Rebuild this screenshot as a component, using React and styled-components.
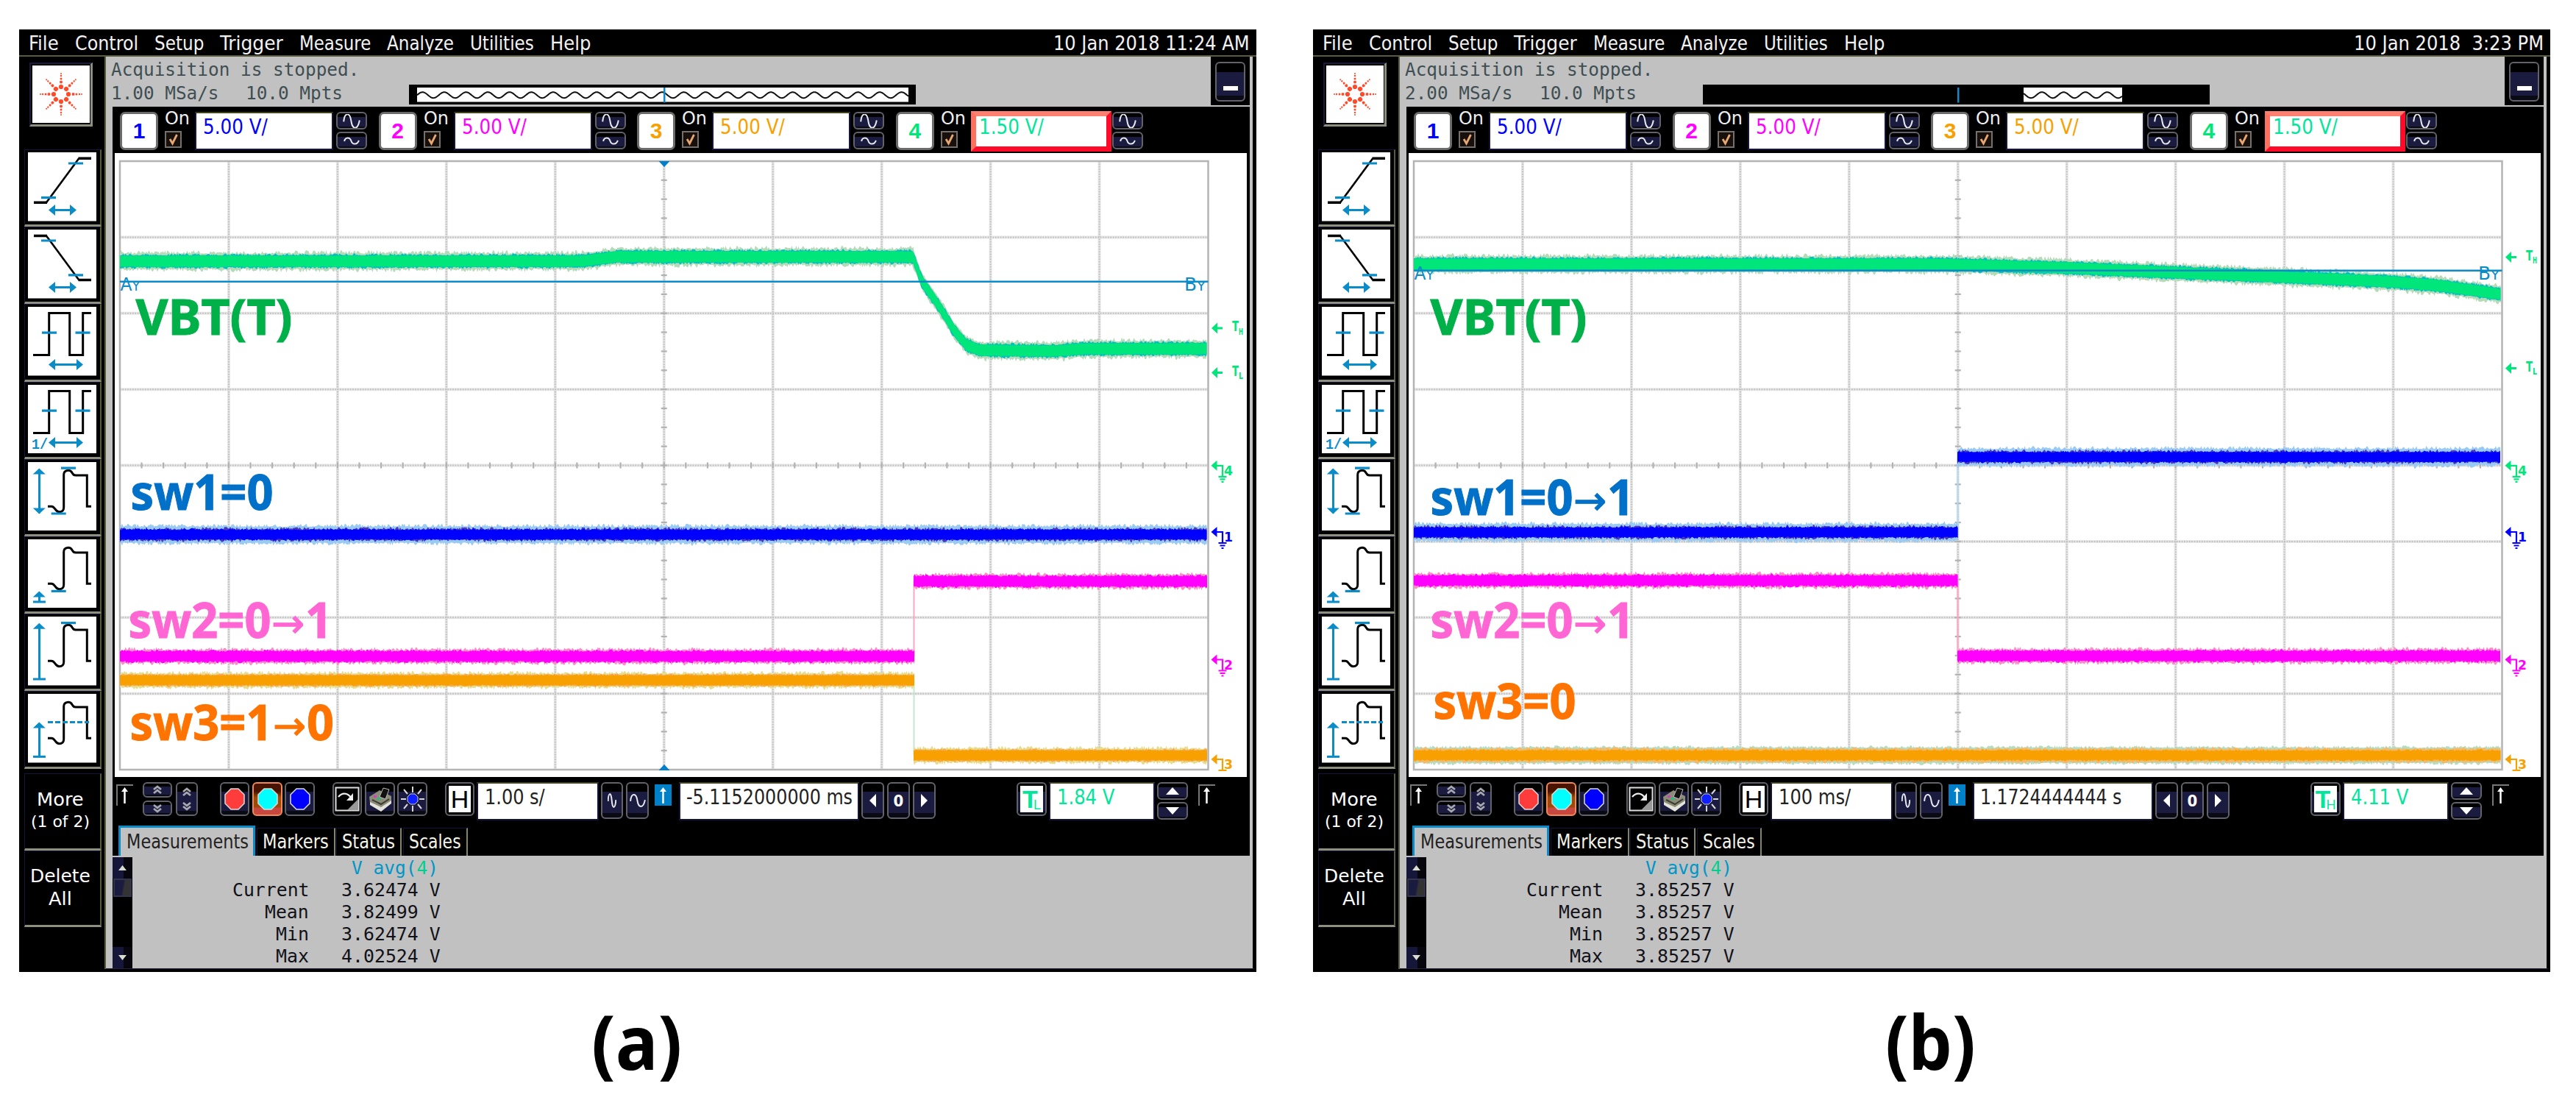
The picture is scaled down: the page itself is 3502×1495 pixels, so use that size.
import React, { useLayoutEffect, useRef, useState } from 'react';
import styled, { createGlobalStyle } from 'styled-components';

const color = {
  grey: '#c1c1c1',
  olive: '#5a5a3c',
  navy: '#1b1b40',
  blue: '#0a8cc8',
  ch1: '#0000ff',
  ch2: '#ff00ff',
  ch3: '#f7a000',
  ch4: '#00e67a',
};

const tahoma = '"DejaVu Sans Condensed", "DejaVu Sans", "Open Sans", sans-serif';
const mono = '"DejaVu Sans Mono", "Liberation Mono", monospace';

const GlobalStyle = createGlobalStyle`
  *, *::before, *::after {
    box-sizing: border-box;
  }

  body {
    margin: 0;
    background: #fff;
    font-family: ${tahoma};
  }

  svg {
    display: block;
    flex: none;
  }
`;

/* ---------- text squeezed to a given width ---------- */

const StyledFit = styled.span`
  display: block;
  flex: none;
  width: ${({ $w }) => $w}px;
  white-space: pre;
`;

const StyledFitInner = styled.span`
  display: inline-block;
  transform-origin: 0 50%;
`;

const Fit = ({ w, children }) => {
  const ref = useRef(null);
  const [scale, setScale] = useState(1);

  useLayoutEffect(() => {
    setScale(w / ref.current.offsetWidth);
  }, [w]);

  return (
    <StyledFit $w={w}>
      <StyledFitInner ref={ref} style={{ transform: `scaleX(${scale})` }}>
        {children}
      </StyledFitInner>
    </StyledFit>
  );
};

/* ---------- page ---------- */

const StyledPage = styled.main`
  display: flex;
  gap: 77px;
  width: 3502px;
  height: 1495px;
  padding: 40px 0 0 26px;
  overflow: hidden;
`;

const StyledFigure = styled.figure`
  width: 1682px;
  margin: 0;
`;

const StyledCaption = styled.figcaption`
  display: flex;
  padding: 39px 0 0 778px;
  font: 700 102px/110px 'Noto Sans', 'Open Sans', sans-serif;
  color: #000;
`;

const StyledScope = styled.section`
  display: flex;
  flex-direction: column;
  height: 1281px;
  background: #000;
`;

const StyledMenuBar = styled.nav`
  display: flex;
  gap: 22px;
  height: 37px;
  padding: 0 9px 0 13px;
  border-bottom: 2px solid ${color.olive};
  font-size: 26.5px;
  line-height: 37px;
  color: #f2f2f2;
`;

const StyledDate = styled.div`
  margin-left: auto;
`;

const StyledBody = styled.div`
  display: flex;
  height: 1240px;
`;

/* ---------- sidebar ---------- */

const StyledSidebar = styled.aside`
  width: 118px;
  padding: 8px 0 0 7px;
  border-right: 2px solid ${color.olive};
`;

const StyledLogo = styled.div`
  width: 86px;
  height: 87px;
  margin: 0 0 31px 7px;
  padding: 2px;
  border: 2px solid ${color.navy};
  border-right: 3px solid #8f8f80;
  border-bottom: 3px solid #8f8f80;
`;

const StyledSideButton = styled.div`
  width: 105px;
  height: 105.2px;
  padding: 3px 0 0 4px;
  border: 1px solid #15153a;
  border-right: 2px solid ${color.olive};
  border-bottom: 3px solid #8f8f80;
`;

const StyledSideText = styled.div`
  display: flex;
  flex-direction: column;
  align-items: center;
  width: 105px;
  height: ${({ $h }) => $h}px;
  margin-top: ${({ $mt }) => $mt || 0}px;
  padding: ${({ $pt }) => $pt}px 7px 0 0;
  border: 1px solid #15153a;
  border-right: 2px solid ${color.olive};
  border-bottom: 3px solid #8f8f80;
  font-size: 25px;
  line-height: 31px;
  color: #fff;
`;

const StyledSmall = styled.span`
  font-size: 21px;
`;

/* ---------- main column ---------- */

const StyledMain = styled.div`
  display: flex;
  flex: 1;
  height: 1240px;
  padding-left: 9px;
  background: ${color.grey};
  border-right: 5px solid #000;
  border-bottom: 1px solid #22223a;
`;

const StyledColumn = styled.div`
  display: flex;
  flex-direction: column;
  width: 1546px;
`;

const StyledStatus = styled.header`
  display: flex;
  height: 68px;
`;

const StyledAcquisition = styled.div`
  width: 403px;
  padding-top: 2px;
  margin-left: -2px;
  font: 24px/32.3px ${mono};
  color: #3e4e52;
`;

const StyledRates = styled.div`
  display: flex;
  gap: 36px;
`;

const StyledMinimizeBox = styled.div`
  width: 53px;
  height: 66px;
  margin-left: auto;
  padding: 7px 0 0 6px;
  background: #000;
`;

const StyledMemory = styled.div`
  display: flex;
  width: 689px;
  height: 27px;
  margin: 38px 0 0 2px;
  background: #000;
`;

/* bevelled key used in both tool bars */
const StyledKey = styled.div`
  display: flex;
  flex: none;
  align-items: center;
  justify-content: center;
  width: ${({ $w }) => $w}px;
  height: ${({ $h }) => $h}px;
  margin-left: ${({ $ml }) => $ml || 0}px;
  border: 2.5px solid #62626a;
  border-radius: 6px;
  background: linear-gradient(#000 0 25%, ${color.navy} 25% 88%, #0a0a14 88%);
  color: #fff;
`;

const StyledHotKey = styled(StyledKey)`
  border-color: #f08858;
  background: linear-gradient(#481400 0 25%, #9c4a08 45%, #9c4a08 75%, #c84840 80%);
`;

const StyledPlainKey = styled(StyledKey)`
  background: #000;
`;

const StyledKeyPair = styled.div`
  display: flex;
  flex-direction: column;
  gap: ${({ $gap }) => $gap || 3}px;
  margin-left: ${({ $ml }) => $ml}px;
`;

const StyledField = styled.div`
  flex: none;
  width: ${({ $w }) => $w}px;
  height: 52px;
  margin-left: ${({ $ml }) => $ml}px;
  padding: ${({ $pl }) => `2px 0 0 ${$pl || 9}px`};
  border: 2px solid #15153a;
  border-top-color: #44441c;
  background: #fff;
  font-size: 28px;
  line-height: 34px;
  color: ${({ $color }) => $color || '#222'};
`;

const StyledActiveField = styled(StyledField)`
  width: 191px;
  height: 55px;
  margin: -1px 0 0 0;
  padding: 0 0 0 4px;
  border: 7px solid;
  border-color: #ff8070 #ff0a28 #ff0a28 #ff7060;
  line-height: 30px;
`;

const StyledChannels = styled.div`
  display: flex;
  height: 63px;
  padding: 7px 0 0 10px;
  background: #000;
`;

const StyledChannel = styled.div`
  display: flex;
  width: 351.6px;
`;

const StyledBadge = styled.div`
  display: flex;
  align-items: center;
  justify-content: center;
  width: 52px;
  height: 52px;
  border: 3px solid #6c6c6c;
  border-radius: 7px;
  background: #fff;
  font: 700 30px/46px 'Liberation Sans', sans-serif;
  color: ${({ $color }) => $color};
`;

const StyledOn = styled.div`
  display: flex;
  flex-direction: column;
  width: 41px;
  margin-left: 9px;
  font-size: 25px;
  line-height: 17px;
  color: #eee;
`;

const StyledCheck = styled.div`
  width: 23px;
  height: 23px;
  margin-top: 9px;
  border: 2px solid #76706c;
  background: #17100c;
`;

const StyledPlot = styled.div`
  height: 848px;
  padding: 1px 0 0 3px;
  background: linear-gradient(90deg, #000 0 3px, #fff 3px 1542px, #000 1542px);
`;

const StyledHorizontal = styled.div`
  display: flex;
  height: 66px;
  padding: 7px 0 0 5px;
  background: #000;
`;

const StyledSlope = styled.div`
  width: 23px;
  height: 29px;
  margin: 3px 0 0 ${({ $ml }) => $ml || 0}px;
  border-top: 2px solid #777;
  border-left: 2px solid #777;
  background: #000;
`;

const StyledSlopeOn = styled(StyledSlope)`
  border-color: #0080c8;
  background: #0080c8;
`;

const StyledWhiteFace = styled.div`
  display: flex;
  justify-content: center;
  width: ${({ $w }) => $w}px;
  height: 36px;
  background: #fff;
  font: ${({ $weight }) => $weight || 400} 34px/36px 'Liberation Sans', sans-serif;
  color: ${({ $color }) => $color || '#000'};
`;

const StyledSub = styled.span`
  align-self: flex-end;
  margin-left: -6px;
  font: 18px/19px 'Liberation Sans', sans-serif;
`;

const StyledZero = styled.span`
  padding-top: 2px;
  font: 700 22px/24px ${tahoma};
`;

const StyledTabs = styled.div`
  display: flex;
  align-items: flex-end;
  height: 41px;
  padding-left: 8px;
  background: #000;
  font-size: 26.5px;
`;

const StyledTab = styled.div`
  height: 38px;
  margin-left: 1.5px;
  padding: 0 7px;
  border: 1px solid #15153a;
  border-right: 2px solid #84846a;
  border-bottom: 0;
  line-height: 35px;
  color: #f4f4e8;
`;

const StyledActiveTab = styled.div`
  height: 41px;
  width: 186px;
  padding: 0 8px;
  border: 3px solid ${color.blue};
  border-bottom: 0;
  background: ${color.grey};
  line-height: 38px;
  color: #222;
`;

const StyledResults = styled.div`
  display: flex;
  height: 153px;
  font: 24.5px/30px ${mono};
`;

const StyledScroll = styled.div`
  display: flex;
  flex-direction: column;
  justify-content: space-between;
  width: 27px;
  margin-top: 2px;
  background: #000;
`;

const StyledScrollEnd = styled.div`
  display: flex;
  align-items: center;
  justify-content: center;
  height: 29px;
  background: linear-gradient(90deg, #16163a 55%, #06060c 55%);
`;

const StyledThumb = styled.div`
  width: 25px;
  height: 26px;
  margin: 0 0 68px 1px;
  border: 2px solid #34344c;
  background: linear-gradient(100deg, ${color.navy} 50%, #333 60%);
`;

const StyledTable = styled.dl`
  display: grid;
  grid-template-columns: 240px auto;
  grid-auto-rows: 30px;
  column-gap: 44px;
  align-content: start;
  justify-items: end;
  margin: 2px 0 0;
  color: #111118;

  dt,
  dd {
    margin: 0;
  }
`;

const StyledHeading = styled.dd`
  padding-right: 3px;
  color: #0096c8;

  b {
    font-weight: 400;
    color: #00cf90;
  }
`;

/* ---------- side bar drawings ---------- */

const Logo = () => (
  <svg width="78" height="78" viewBox="0 0 78 78">
    <rect width="78" height="78" fill="#fff" />
    {[0, 45, 90, 135, 180, 225, 270, 315].map((angle) => (
      <g key={angle} fill="#ff4a2a" transform={`rotate(${angle} 39 39)`}>
        <circle cx="49" cy="39" r="3.1" />
        <circle cx="55.5" cy="39" r="2" />
        <circle cx="60" cy="39" r="1.5" />
        <circle cx="64" cy="39" r="1.2" />
        <circle cx="67" cy="39" r="1" />
      </g>
    ))}
  </svg>
);

const pulse = 'M7 65.4H28.7V8.6H56.7V65.4H74.7V8.6H86';
const overshoot =
  'M27 60.3h5c5 0 5 7.5 10.5 7.5 4 0 6.2-2.5 6.2-6V17c0-7 9-7 11.3-2.5 1.5 2.5 2 3.5 5 3.5h15.3v42.3H86';

const Spread = ({ x2 }) => (
  <g fill={color.blue} stroke="none">
    <rect x="33" y="77" width={x2 - 38} height="3" />
    <path d={`M28 78.5l9-7.5v15zM${x2} 78.5l-9-7.5v15z`} />
  </g>
);

const Ticks = ({ d }) => <path d={d} stroke={color.blue} strokeWidth="3.2" />;

const Rise = ({ top, bottom, both }) => (
  <g fill={color.blue} stroke="none">
    <rect x="14" y={top + 3} width="3" height={bottom - top - 4} />
    <path d={`M15.3 ${top}l8.5 8h-17z`} />
    {both ? (
      <path d={`M15.3 ${bottom}l8.5-8h-17z`} />
    ) : (
      <rect x="7" y={bottom - 1.5} width="17" height="3" />
    )}
  </g>
);

const sideIcons = [
  <>
    <path d="M8 68.3H26M68.5 8.3H86" strokeWidth="3.5" />
    <path d="M25 68.3L69.3 8.3" strokeWidth="2.6" />
    <Ticks d="M18 61.7H38M55 15H75" />
    <Spread x2={66} />
  </>,
  <>
    <path d="M8 8.6H26M68.5 68.6H86" strokeWidth="3.5" />
    <path d="M25 8.6L69.3 68.6" strokeWidth="2.6" />
    <Ticks d="M18 15H38M55 61.8H75" />
    <Spread x2={66} />
  </>,
  <>
    <path d={pulse} />
    <Ticks d="M19 35.2H39M64.5 35.2H84.5" />
    <Spread x2={75} />
  </>,
  <>
    <path d={pulse} />
    <Ticks d="M19 35.2H39M64.5 35.2H84.5" />
    <Spread x2={75} />
    <text
      x="5"
      y="86.5"
      fontSize="21"
      fontWeight="700"
      fontFamily="Liberation Mono"
      textLength="22"
      lengthAdjust="spacingAndGlyphs"
      fill={color.blue}
      stroke="none"
    >
      1/
    </text>
  </>,
  <>
    <path d={overshoot} />
    <Ticks d="M45 8.2H65M31.7 70H51.7" />
    <Rise top={8.5} bottom={70.5} both />
  </>,
  <>
    <path d={overshoot} />
    <Ticks d="M31.7 70.4H51.7" />
    <Rise top={70.4} bottom={85} />
  </>,
  <>
    <path d={overshoot} />
    <Ticks d="M45 8.6H65" />
    <Rise top={8.7} bottom={85} />
  </>,
  <>
    <path d={overshoot} />
    <path d="M27 38.4H83" stroke={color.blue} strokeWidth="3" strokeDasharray="7 3" />
    <Rise top={38.4} bottom={85.4} />
  </>,
];

const Sidebar = () => (
  <StyledSidebar>
    <StyledLogo>
      <Logo />
    </StyledLogo>
    {sideIcons.map((icon, index) => (
      <StyledSideButton key={index}>
        <svg width="93" height="93.5" viewBox="0 0 93 93.5" fill="none" stroke="#000" strokeWidth="3">
          <rect width="93" height="93.5" fill="#fff" stroke="none" />
          {icon}
        </svg>
      </StyledSideButton>
    ))}
    <StyledSideText $h={105} $mt={6} $pt={19}>
      <Fit w={64}>More</Fit>
      <StyledSmall>
        <Fit w={80}>(1 of 2)</Fit>
      </StyledSmall>
    </StyledSideText>
    <StyledSideText $h={104} $pt={18}>
      <Fit w={82}>Delete</Fit>
      <Fit w={32}>All</Fit>
    </StyledSideText>
  </StyledSidebar>
);

/* ---------- small glyphs ---------- */

const Sine = ({ w, h, amp }) => (
  <svg width={w} height={h} viewBox="0 0 20 20" preserveAspectRatio="none">
    <path
      d={`M1 11C2 ${10 - amp} 8 ${10 - amp} 9.5 10S17 ${10 + amp} 19 9`}
      fill="none"
      stroke="#e8e8f0"
      strokeWidth="2"
      vectorEffect="non-scaling-stroke"
    />
  </svg>
);

const Chevrons = ({ down }) => (
  <svg width="14" height="13" viewBox="0 0 14 13" fill="none" stroke="#a8a8b0" strokeWidth="2.8">
    <path d={down ? 'M2 2l5 4 5-4M2 7l5 4 5-4' : 'M2 6l5-4 5 4M2 11l5-4 5 4'} />
  </svg>
);

const Triangle = ({ w, h, points, fill = '#fff' }) => (
  <svg width={w} height={h} viewBox="0 0 10 10" preserveAspectRatio="none">
    <polygon points={points} fill={fill} />
  </svg>
);

const Dot = ({ fill }) => (
  <svg width="30" height="30" viewBox="0 0 30 30">
    <path d="M10 1h10l8 8v12l-8 8H10l-8-8V9z" fill={fill} stroke="#dcdcdc" strokeWidth="1.5" />
  </svg>
);

const SlopeArrow = () => (
  <svg width="20" height="26" viewBox="0 0 20 26">
    <path d="M9.5 24V5" stroke="#fff" strokeWidth="2.5" />
    <path d="M9.5 2l4.5 6H5z" fill="#fff" />
  </svg>
);

const SINE_PERIOD = 29.6;

const waveLine = (width, phase) => {
  const points = [];
  for (let x = 0; x <= width; x += 1) {
    const y = 10.2 - 4 * Math.sin(((x - phase) / SINE_PERIOD) * Math.PI * 2);
    points.push(`${x},${y.toFixed(1)}`);
  }
  return points.join(' ');
};

const MemoryBar = ({ start, width, phase }) => (
  <StyledMemory>
    <svg width="689" height="27" viewBox="0 0 689 27">
      <g transform={`translate(${start} 4)`}>
        <rect width={width} height="19.5" fill="#fff" />
        <polyline points={waveLine(width, phase)} fill="none" stroke="#111" strokeWidth="2" />
      </g>
      <rect x="346" y="4" width="2.5" height="20.5" fill={color.blue} />
    </svg>
  </StyledMemory>
);

/* ---------- plot ---------- */

const LEFT = 163;
const RIGHT = 1642.5;
const TOP = 219;
const BOTTOM = 1046;
const COL = (RIGHT - LEFT) / 10;
const ROW = (BOTTOM - TOP) / 8;

const random = (seed) => {
  let s = seed;
  return () => {
    s = (s * 16807) % 2147483647;
    return s / 2147483647;
  };
};

const centreAt = (points, x) => {
  const i = points.findIndex(([px]) => px >= x);
  if (i < 1) return points[0][1];
  const [x0, y0] = points[i - 1];
  const [x1, y1] = points[i];
  return y0 + ((y1 - y0) * (x - x0)) / (x1 - x0);
};

// polygon around a centre line with ragged upper and lower edges
const band = (points, half, jitter, seed) => {
  const next = random(seed);
  const upper = [];
  const lower = [];
  const end = points[points.length - 1][0];
  for (let x = points[0][0]; x <= end; x += 1.5) {
    const y = centreAt(points, x);
    upper.push(`${x},${(y - half - next() ** 2 * jitter).toFixed(1)}`);
    lower.unshift(`${x},${(y + half + next() ** 2 * jitter).toFixed(1)}`);
  }
  return [...upper, ...lower].join(' ');
};

const noise = {
  ch1: [
    ['#98caf4', 10.5, 4.5],
    ['#4a38b8', 6.5, 4],
    [color.ch1, 6, 2.5],
  ],
  ch2: [
    ['#ff8cc8', 8, 4.5],
    [color.ch2, 6.5, 3],
  ],
  ch3: [
    ['#e6dc8c', 8.5, 4.5],
    ['#f8a850', 7, 2.5],
    [color.ch3, 6, 2],
  ],
  ch3green: [
    ['#b4dcc0', 10, 3.5],
    ['#f4b868', 8, 3.5],
    [color.ch3, 6, 2.5],
  ],
  ch4: [
    ['#b4dab8', 10, 5],
    ['#00c0c0', 7.8, 3],
    [color.ch4, 7, 1.5],
  ],
};

const Trace = ({ points, kind, seed }) => (
  <g>
    {noise[kind].map(([fill, half, jitter], i) => (
      <polygon key={fill} points={band(points, half, jitter, seed * 100 + i * 7 + 11)} fill={fill} />
    ))}
  </g>
);

const range = (n) => Array.from({ length: n }, (_, i) => i + 1);

const Grid = () => (
  <g fill="none" stroke="#b2b2b2" strokeWidth="2.2">
    <g stroke="#e6e6e6" strokeWidth="4">
      {range(9).map((i) => (
        <path key={`v${i}`} d={`M${LEFT + i * COL} ${TOP}V${BOTTOM}`} />
      ))}
      {range(7).map((i) => (
        <path key={`h${i}`} d={`M${LEFT} ${TOP + i * ROW}H${RIGHT}`} />
      ))}
    </g>
    <g stroke="#bebebe" strokeWidth="2" strokeDasharray="1.6 1.8">
      {range(9).map((i) => (
        <path key={`v${i}`} d={`M${LEFT + i * COL} ${TOP}V${BOTTOM}`} />
      ))}
      {range(7).map((i) => (
        <path key={`h${i}`} d={`M${LEFT} ${TOP + i * ROW}H${RIGHT}`} />
      ))}
    </g>
    {range(31).map((i) => (
      <path key={`y${i}`} d={`M${LEFT + 5 * COL - 4} ${TOP + (i * ROW) / 4}h8`} />
    ))}
    {range(49).map((i) => (
      <path key={`x${i}`} d={`M${LEFT + (i * COL) / 5} ${TOP + 4 * ROW - 4}v8`} />
    ))}
    <rect x={LEFT} y={TOP} width={RIGHT - LEFT} height={BOTTOM - TOP} stroke="#b4b4b4" strokeWidth="2.5" />
  </g>
);

const Ground = ({ y, n, fill, short }) => (
  <g fill="none" stroke={fill} strokeWidth="2.2">
    <path d={`M1646.5 ${y}l8-7v14z`} fill={fill} stroke="none" />
    <path d={`M1653 ${y}h9v14M1656.5 ${y + 15}h11`} />
    {!short && <path d={`M1658.5 ${y + 18.5}h7M1660.5 ${y + 22}h3`} />}
    <text
      x="1664"
      y={y + 13}
      fill={fill}
      stroke="none"
      fontSize="18"
      fontWeight="700"
      fontFamily="DejaVu Sans"
      textLength="12"
      lengthAdjust="spacingAndGlyphs"
    >
      {n}
    </text>
  </g>
);

const Threshold = ({ y, sub }) => (
  <g fill={color.ch4} fontFamily="DejaVu Sans" fontWeight="700">
    <path d={`M1647 ${y}l8-7.5v6h7v3h-7v6z`} />
    <text x="1675" y={y + 4} fontSize="20" textLength="9" lengthAdjust="spacingAndGlyphs">
      T
    </text>
    <text x="1684" y={y + 8.5} fontSize="13" textLength="6" lengthAdjust="spacingAndGlyphs">
      {sub}
    </text>
  </g>
);

const Cursor = ({ y }) => (
  <g fill={color.blue} fontFamily="DejaVu Sans">
    <rect x={LEFT} y={y - 1.2} width={RIGHT - LEFT} height="2.5" />
    <text x="163.5" y={y + 12.5} fontSize="24" textLength="16" lengthAdjust="spacingAndGlyphs">
      A
    </text>
    <text x="179.5" y={y + 12.5} fontSize="17" textLength="11" lengthAdjust="spacingAndGlyphs">
      Y
    </text>
    <text x="1610" y={y + 12.5} fontSize="24" textLength="17" lengthAdjust="spacingAndGlyphs">
      B
    </text>
    <text x="1627" y={y + 12.5} fontSize="17" textLength="12" lengthAdjust="spacingAndGlyphs">
      Y
    </text>
  </g>
);

const Label = ({ x, y, fill, text, width = 194, to }) => (
  <g
    fill={fill}
    stroke={fill}
    strokeWidth="1"
    fontFamily="Noto Sans, Open Sans, sans-serif"
    fontWeight="700"
    fontSize="67"
  >
    <text x={x - 2.5} y={y} textLength={width} lengthAdjust="spacingAndGlyphs">
      {text}
    </text>
    {to && (
      <>
        <text x={x + 192} y={y - 1} fontFamily="DejaVu Sans" fontWeight="400" fontSize="54">
          →
        </text>
        <text x={x + 238} y={y} textLength="37" lengthAdjust="spacingAndGlyphs">
          {to}
        </text>
      </>
    )}
  </g>
);

const Plot = ({ scope }) => (
  <StyledPlot>
    <svg width="1539" height="847" viewBox="156 209 1539 847">
      <Grid />
      {scope.showReference && (
        <path d="M895.5 219h15l-7.5 8zM895.5 1047h15l-7.5-8z" fill="#0080c8" />
      )}
      {scope.edges.map(({ x, from, to, stroke }) => (
        <path key={stroke} d={`M${x} ${from}V${to}`} stroke={stroke} strokeWidth="2" />
      ))}
      {scope.traces.map(({ kind, points }, i) => (
        <Trace key={i} kind={kind} points={points} seed={i + scope.seed} />
      ))}
      <Cursor y={scope.cursor} />
      <Threshold y={scope.high} sub="H" />
      <Threshold y={scope.low} sub="L" />
      <Ground y={632.8} n="4" fill={color.ch4} />
      <Ground y={723} n="1" fill={color.ch1} />
      <Ground y={896.5} n="2" fill={color.ch2} />
      <Ground y={1032} n="3" fill={color.ch3} short />
      {scope.labels.map((label) => (
        <Label key={label.text} {...label} />
      ))}
    </svg>
  </StyledPlot>
);

/* ---------- scope ---------- */

const menu = [
  ['File', 41],
  ['Control', 86],
  ['Setup', 67],
  ['Trigger', 86],
  ['Measure', 97],
  ['Analyze', 91],
  ['Utilities', 87],
  ['Help', 55],
];

const channels = [
  { n: 1, value: '5.00 V/', fill: color.ch1 },
  { n: 2, value: '5.00 V/', fill: color.ch2 },
  { n: 3, value: '5.00 V/', fill: color.ch3 },
  { n: 4, value: '1.50 V/', fill: color.ch4, active: true },
];

const Channel = ({ n, value, fill, active }) => (
  <StyledChannel>
    <StyledBadge $color={fill}>{n}</StyledBadge>
    <StyledOn>
      <Fit w={34}>On</Fit>
      <StyledCheck>
        <svg width="19" height="19" viewBox="0 0 19 19">
          <path d="M5 9l3.5 6 6-12" fill="none" stroke="#e8a670" strokeWidth="2.8" />
        </svg>
      </StyledCheck>
    </StyledOn>
    {active ? (
      <StyledActiveField $color="#00e69a">
        <Fit w={88}>{value}</Fit>
      </StyledActiveField>
    ) : (
      <StyledField $w={188} $ml={0} $color={fill}>
        <Fit w={88}>{value}</Fit>
      </StyledField>
    )}
    <StyledKeyPair $ml={active ? 1 : 4}>
      <StyledKey $w={42} $h={24}>
        <Sine w={24} h={19} amp={13} />
      </StyledKey>
      <StyledKey $w={42} $h={24}>
        <Sine w={22} h={11} amp={10} />
      </StyledKey>
    </StyledKeyPair>
  </StyledChannel>
);

const ZoomIcon = () => (
  <svg width="34" height="34" viewBox="0 0 34 34">
    <rect x="1.5" y="1.5" width="31" height="31" fill="#000" stroke="#ddd" strokeWidth="2" />
    <path d="M32 17v15H17z" fill="#999" />
    <path d="M5 14c5-6 12-6 17 1" fill="none" stroke="#eee" strokeWidth="2.2" />
    <path d="M25 9v10h-9z" fill="#eee" />
  </svg>
);

const PrinterIcon = () => (
  <svg width="34" height="36" viewBox="0 0 34 36">
    <path d="M2 15l14-9 16 8v8L18 34 3 23z" fill="#8c8c78" />
    <path d="M3 22l15 7 14-9v4L18 35 3 26z" fill="#e4e4dc" />
    <path d="M16 15l5-12 8 2-5 13z" fill="#111" stroke="#bbb" />
    <path d="M6 19l12 6 11-7" fill="none" stroke="#3c3c34" strokeWidth="2" />
    <rect x="8" y="13" width="4" height="3" fill="#d040c0" />
    <rect x="13" y="16" width="4" height="3" fill="#20c080" />
  </svg>
);

const IntensityIcon = () => (
  <svg width="34" height="36" viewBox="0 0 34 36">
    <path
      d="M17 1v8M17 27v8M1 18h7M26 18h7M5 5l5 6M29 5l-5 6M5 31l5-6M29 31l-5-6"
      stroke="#d8d8d8"
      strokeWidth="2"
    />
    <path d="M14 11h6l4 4v6l-4 4h-6l-4-4v-6z" fill="#1020ff" stroke="#ccc" />
  </svg>
);

const HorizontalBar = ({ timebase, timebaseWidth, delay, delayWidth, trigger, triggerSub }) => (
  <StyledHorizontal>
    <StyledSlope>
      <SlopeArrow />
    </StyledSlope>
    <StyledKeyPair $ml={13} $gap={4}>
      <StyledKey $w={40} $h={21}>
        <Chevrons />
      </StyledKey>
      <StyledKey $w={40} $h={21}>
        <Chevrons down />
      </StyledKey>
    </StyledKeyPair>
    <StyledKey $ml={5} $w={30} $h={46}>
      <svg width="14" height="34" viewBox="0 0 14 34" fill="none" stroke="#a8a8b0" strokeWidth="2.8">
        <path d="M2 7l5-4 5 4M2 12l5-4 5 4M2 22l5 4 5-4M2 27l5 4 5-4" />
      </svg>
    </StyledKey>
    <StyledKey $ml={30} $w={40} $h={46}>
      <Dot fill="#ff3c3c" />
    </StyledKey>
    <StyledHotKey $ml={4} $w={41} $h={46}>
      <Dot fill="#00ffff" />
    </StyledHotKey>
    <StyledKey $ml={3} $w={41} $h={46}>
      <Dot fill="#0000ff" />
    </StyledKey>
    <StyledPlainKey $ml={24} $w={40} $h={46}>
      <ZoomIcon />
    </StyledPlainKey>
    <StyledKey $ml={4} $w={41} $h={46}>
      <PrinterIcon />
    </StyledKey>
    <StyledKey $ml={3} $w={41} $h={46}>
      <IntensityIcon />
    </StyledKey>
    <StyledPlainKey $ml={24} $w={40} $h={46}>
      <StyledWhiteFace $w={30}>H</StyledWhiteFace>
    </StyledPlainKey>
    <StyledField $ml={3} $w={166}>
      <Fit w={timebaseWidth}>{timebase}</Fit>
    </StyledField>
    <StyledKey $ml={3} $w={30} $h={50}>
      <Sine w={12} h={20} amp={12} />
    </StyledKey>
    <StyledKey $ml={4} $w={31} $h={50}>
      <Sine w={22} h={18} amp={12} />
    </StyledKey>
    <StyledSlopeOn $ml={8}>
      <SlopeArrow />
    </StyledSlopeOn>
    <StyledField $ml={10} $w={245} $pl={8}>
      <Fit w={delayWidth}>{delay}</Fit>
    </StyledField>
    <StyledKey $ml={3} $w={31} $h={50}>
      <Triangle w={9} h={18} points="10,0 10,10 0,5" />
    </StyledKey>
    <StyledKey $ml={4} $w={31} $h={50}>
      <StyledZero>0</StyledZero>
    </StyledKey>
    <StyledKey $ml={4} $w={31} $h={50}>
      <Triangle w={9} h={18} points="0,0 0,10 10,5" />
    </StyledKey>
    <StyledKey $ml={110} $w={41} $h={46}>
      <StyledWhiteFace $w={31} $color="#00e69a" $weight={700}>
        T<StyledSub>{triggerSub}</StyledSub>
      </StyledWhiteFace>
    </StyledKey>
    <StyledField $ml={3} $w={144} $color="#00e69a">
      <Fit w={78}>{trigger}</Fit>
    </StyledField>
    <StyledKeyPair $ml={3} $gap={3}>
      <StyledKey $w={42} $h={24}>
        <Triangle w={18} h={10} points="5,0 10,10 0,10" />
      </StyledKey>
      <StyledKey $w={42} $h={24}>
        <Triangle w={18} h={10} points="0,0 10,0 5,10" />
      </StyledKey>
    </StyledKeyPair>
    <StyledSlope $ml={14}>
      <SlopeArrow />
    </StyledSlope>
  </StyledHorizontal>
);

const Results = ({ values }) => (
  <StyledResults>
    <StyledScroll>
      <StyledScrollEnd>
        <Triangle w={11} h={7} points="5,0 10,10 0,10" fill="#d8dcd0" />
      </StyledScrollEnd>
      <StyledThumb />
      <StyledScrollEnd>
        <Triangle w={11} h={7} points="0,0 10,0 5,10" fill="#d8dcd0" />
      </StyledScrollEnd>
    </StyledScroll>
    <StyledTable>
      <dt />
      <StyledHeading>
        <Fit w={118}>
          V avg(<b>4</b>)
        </Fit>
      </StyledHeading>
      {['Current', 'Mean', 'Min', 'Max'].map((name, i) => (
        <React.Fragment key={name}>
          <dt>
            <Fit w={name.length * 14.9}>{name}</Fit>
          </dt>
          <dd>
            <Fit w={135}>{values[i]} V</Fit>
          </dd>
        </React.Fragment>
      ))}
    </StyledTable>
  </StyledResults>
);

const Scope = ({ scope }) => (
  <StyledFigure>
    <StyledScope>
      <StyledMenuBar>
        {menu.map(([name, w]) => (
          <Fit key={name} w={w}>
            {name}
          </Fit>
        ))}
        <StyledDate>
          <Fit w={scope.dateWidth}>{scope.date}</Fit>
        </StyledDate>
      </StyledMenuBar>
      <StyledBody>
        <Sidebar />
        <StyledMain>
          <StyledColumn>
            <StyledStatus>
              <StyledAcquisition>
                <Fit w={337}>Acquisition is stopped.</Fit>
                <StyledRates>
                  <Fit w={147}>{scope.rate}</Fit>
                  <Fit w={132}>10.0 Mpts</Fit>
                </StyledRates>
              </StyledAcquisition>
              <MemoryBar {...scope.memory} />
              <StyledMinimizeBox>
                <StyledKey $w={41} $h={54}>
                  <svg width="20" height="26" viewBox="0 0 20 26">
                    <rect y="19" width="20" height="6" fill="#fff" />
                  </svg>
                </StyledKey>
              </StyledMinimizeBox>
            </StyledStatus>
            <StyledChannels>
              {channels.map((channel) => (
                <Channel key={channel.n} {...channel} />
              ))}
            </StyledChannels>
            <Plot scope={scope} />
            <HorizontalBar {...scope.horizontal} />
            <StyledTabs>
              <StyledActiveTab>
                <Fit w={166}>Measurements</Fit>
              </StyledActiveTab>
              <StyledTab>
                <Fit w={90}>Markers</Fit>
              </StyledTab>
              <StyledTab>
                <Fit w={72}>Status</Fit>
              </StyledTab>
              <StyledTab>
                <Fit w={71}>Scales</Fit>
              </StyledTab>
            </StyledTabs>
            <Results values={scope.values} />
          </StyledColumn>
        </StyledMain>
      </StyledBody>
    </StyledScope>
    <StyledCaption>
      <Fit w={123}>{scope.caption}</Fit>
    </StyledCaption>
  </StyledFigure>
);

const scopes = [
  {
    caption: '(a)',
    seed: 3,
    date: '10 Jan 2018 11:24 AM',
    dateWidth: 267,
    rate: '1.00 MSa/s',
    memory: { start: 11, width: 668, phase: 0 },
    cursor: 382.7,
    high: 446,
    low: 506.5,
    showReference: true,
    edges: [
      { x: 1242.5, from: 790, to: 892, stroke: '#ffa4c4' },
      { x: 1242.5, from: 924, to: 1027, stroke: '#c4e8cc' },
    ],
    traces: [
      {
        kind: 'ch4',
        points: [
          [163, 355],
          [790, 355],
          [838, 349],
          [1241, 349],
          [1253, 382],
          [1276, 415],
          [1297, 449],
          [1314, 469],
          [1332, 476],
          [1432, 477],
          [1475, 474],
          [1641, 474],
        ],
      },
      { kind: 'ch1', points: [[163, 726.5], [1641, 726.5]] },
      { kind: 'ch2', points: [[163, 892], [1243, 892]] },
      { kind: 'ch2', points: [[1242, 790], [1641, 790]] },
      { kind: 'ch3', points: [[163, 924.5], [1243, 924.5]] },
      { kind: 'ch3', points: [[1242, 1026.6], [1641, 1026.6]] },
    ],
    labels: [
      { x: 187, y: 455, width: 213, fill: '#00b048', text: 'VBT(T)' },
      { x: 180, y: 693, fill: '#0070c8', text: 'sw1=0' },
      { x: 177, y: 867, fill: '#ff66d4', text: 'sw2=0', to: '1' },
      { x: 179, y: 1006, fill: '#ff7300', text: 'sw3=1', to: '0' },
    ],
    horizontal: {
      timebase: '1.00 s/',
      timebaseWidth: 82,
      delay: '-5.1152000000 ms',
      delayWidth: 226,
      trigger: '1.84 V',
      triggerSub: 'L',
    },
    values: ['3.62474', '3.82499', '3.62474', '4.02524'],
  },
  {
    caption: '(b)',
    seed: 21,
    date: '10 Jan 2018  3:23 PM',
    dateWidth: 258,
    rate: '2.00 MSa/s',
    memory: { start: 436, width: 134, phase: 17.5 },
    cursor: 367.7,
    high: 349.5,
    low: 500.5,
    edges: [
      { x: 902.5, from: 621, to: 723, stroke: '#b4d8f8' },
      { x: 902.5, from: 789, to: 892, stroke: '#ffa4c4' },
    ],
    traces: [
      {
        kind: 'ch4',
        points: [
          [163, 359],
          [880, 359],
          [1050, 364],
          [1198, 370.5],
          [1346, 376.5],
          [1494, 383],
          [1560, 388.5],
          [1641, 400],
        ],
      },
      { kind: 'ch1', points: [[163, 723.5], [903, 723.5]] },
      { kind: 'ch1', points: [[902, 621], [1641, 621]] },
      { kind: 'ch2', points: [[163, 789], [903, 789]] },
      { kind: 'ch2', points: [[902, 891.5], [1641, 891.5]] },
      { kind: 'ch3green', points: [[163, 1026.5], [1641, 1026.5]] },
    ],
    labels: [
      { x: 188, y: 455, width: 213, fill: '#00b048', text: 'VBT(T)' },
      { x: 188, y: 700, fill: '#0070c8', text: 'sw1=0', to: '1' },
      { x: 188, y: 867, fill: '#ff66d4', text: 'sw2=0', to: '1' },
      { x: 192, y: 976.5, fill: '#ff7300', text: 'sw3=0' },
    ],
    horizontal: {
      timebase: '100 ms/',
      timebaseWidth: 98,
      delay: '1.1724444444 s',
      delayWidth: 192,
      trigger: '4.11 V',
      triggerSub: 'H',
    },
    values: ['3.85257', '3.85257', '3.85257', '3.85257'],
  },
];

const App = () => (
  <>
    <GlobalStyle />
    <StyledPage>
      {scopes.map((scope) => (
        <Scope key={scope.caption} scope={scope} />
      ))}
    </StyledPage>
  </>
);

export default App;
